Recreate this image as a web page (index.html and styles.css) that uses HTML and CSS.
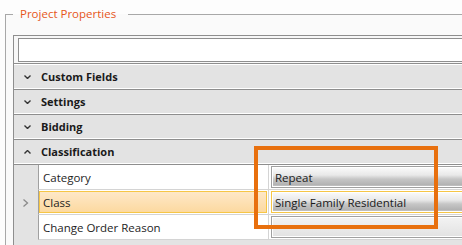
FILE: index.html
```html
<!DOCTYPE html>
<html lang="en">
<head>
    <meta charset="UTF-8" />
    <title>Project Properties</title>
    <link rel="stylesheet" href="styles.css">
</head>
<body>
    <div class="page">
        <fieldset class="group">
            <legend class="group-title">Project Properties</legend>
            <div class="panel">
                <div class="search">
                    <input class="search-box" type="text" />
                </div>
                <div class="grid">
                    <div class="category">
                        <svg class="chev" width="7" height="4" viewBox="0 0 7 4"><polyline points="0.5,0.5 3.5,3.5 6.5,0.5" /></svg>
                        <span>Custom Fields</span>
                    </div>
                    <div class="category">
                        <svg class="chev" width="7" height="4" viewBox="0 0 7 4"><polyline points="0.5,0.5 3.5,3.5 6.5,0.5" /></svg>
                        <span>Settings</span>
                    </div>
                    <div class="category">
                        <svg class="chev" width="7" height="4" viewBox="0 0 7 4"><polyline points="0.5,0.5 3.5,3.5 6.5,0.5" /></svg>
                        <span>Bidding</span>
                    </div>
                    <div class="category">
                        <svg class="chev" width="7" height="4" viewBox="0 0 7 4"><polyline points="0.5,3.5 3.5,0.5 6.5,3.5" /></svg>
                        <span>Classification</span>
                    </div>

                    <div class="prop">
                        <div class="margin"></div>
                        <div class="name"><div class="name-inner">Category</div></div>
                        <div class="value"><div class="value-box">Repeat</div></div>
                    </div>
                    <div class="prop selected">
                        <div class="margin">
                            <svg class="row-arrow" width="6" height="8" viewBox="0 0 6 8"><polyline points="0.5,0.5 4.5,4 0.5,7.5" /></svg>
                        </div>
                        <div class="name"><div class="name-inner">Class</div></div>
                        <div class="value"><div class="value-box">Single Family Residential</div></div>
                    </div>
                    <div class="prop">
                        <div class="margin"></div>
                        <div class="name"><div class="name-inner">Change Order Reason</div></div>
                        <div class="value"><div class="value-box empty"></div></div>
                    </div>
                    <div class="category"></div>
                </div>
            </div>
        </fieldset>

        <!-- annotation box drawn over the grid -->
        <div class="highlight"></div>
    </div>
</body>
</html>
```

FILE: styles.css
```css
html, body {
    margin: 0;
    padding: 0;
    overflow: hidden;
}

body {
    font-family: "Open Sans", "Noto Sans", sans-serif;
    font-size: 11.5px;
    color: #1e1e1e;
    background: #fdfdfd;
}

.page {
    position: relative;
    width: 462px;
    height: 245px;
    overflow: hidden;
}

.group {
    margin: 5px 0 0 5px;
    padding: 12px 0 0 7px;
    width: 700px;
    height: 300px;
    border: 1px solid #a8a8a8;
    background: #fafafa;
}

.group-title {
    margin-left: 0;
    padding: 0 12px 0 7px;
    font-size: 11.5px;
    line-height: 18px;
    color: #e6561a;
}

.panel {
    border-top: 1px solid #8e8e8e;
    border-left: 1px solid #8e8e8e;
    background: #f7f7f7;
}

.search {
    padding: 2px 0 1px 4px;
}

.search-box {
    display: block;
    box-sizing: border-box;
    width: 100%;
    height: 24px;
    margin: 0;
    border: 1px solid #8f8f8f;
    background: #fff;
}

.grid {
    border-top: 1px solid #8e8e8e;
    padding-top: 1px;
    background: #fff;
}

.category {
    display: flex;
    align-items: center;
    height: 24px;
    background: #e3e3e3;
    border-bottom: 1px solid #8e8e8e;
    box-shadow: inset 0 -1px 0 #fff;
    font-size: 11px;
    font-weight: bold;
    color: #1a1a1a;
}

.category span {
    margin-top: -1px;
}

.chev {
    margin: 0 10px 1px 10px;
    fill: none;
    stroke: #333;
    stroke-width: 1.4;
}

.prop {
    display: grid;
    grid-template-columns: 24px 231px 1fr;
    height: 25px;
}

.margin {
    display: flex;
    align-items: center;
    background: #e3e3e3;
}

.row-arrow {
    margin-left: 9px;
    fill: none;
    stroke: #8a8a8a;
    stroke-width: 1.3;
}

.name {
    border-left: 1px solid #a0a0a0;
    border-right: 1px solid #d4d4d4;
    border-bottom: 1px solid #d4d4d4;
    background: #fff;
    padding: 1px 1px 1px 0;
}

.name-inner {
    box-sizing: border-box;
    height: 100%;
    display: flex;
    align-items: center;
    padding-left: 3px;
    border: 1px solid transparent;
}

.selected .name-inner {
    border-color: #f6c646;
    background: linear-gradient(to bottom, #fee8c8, #fcd9a0);
}

.value {
    border-bottom: 1px solid #d4d4d4;
    background: #fff;
    padding: 1px 0 1px 2px;
}

.value-box {
    box-sizing: border-box;
    height: 100%;
    display: flex;
    align-items: center;
    padding-left: 3px;
    border: 1px solid #a0a0a0;
    box-shadow: inset 0 0 0 1px #fff;
    background: linear-gradient(to bottom, #fbfbfb 0%, #e9e9e9 40%, #c6c6c6 60%, #b3b3b3 88%, #cfcfcf 100%);
    color: #1a1a1a;
}

.selected .value-box {
    border-color: #f6c646;
}

.value-box.empty {
    background: linear-gradient(to bottom, #f3f3f3, #e2e2e2);
}

.highlight {
    position: absolute;
    left: 254px;
    top: 146px;
    width: 184px;
    height: 83px;
    box-sizing: border-box;
    border: 4px solid #e8700e;
}
```
